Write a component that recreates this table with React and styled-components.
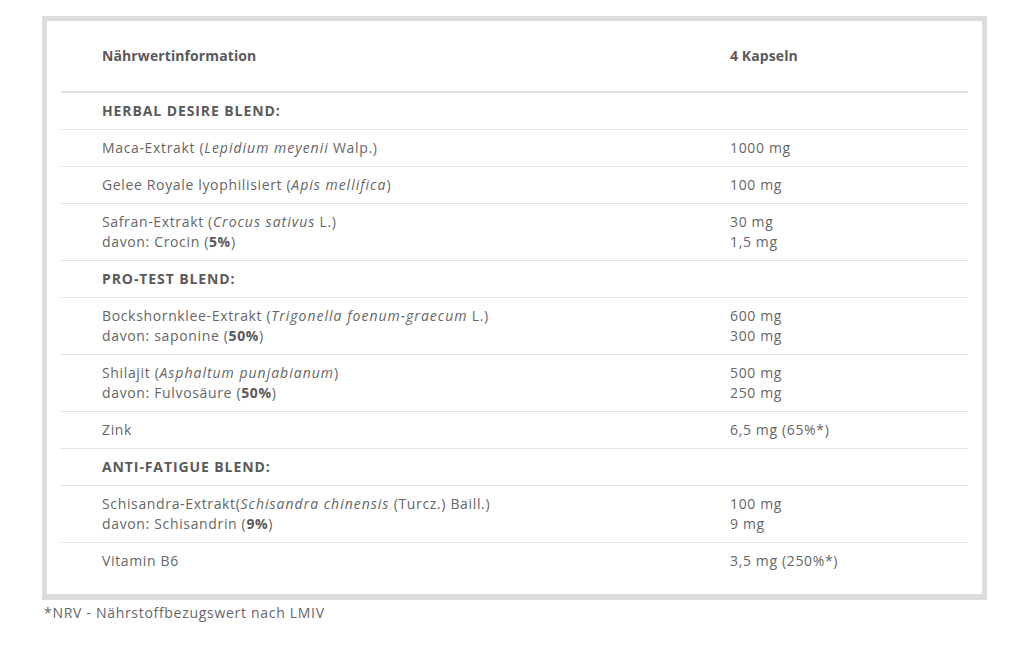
import styled, { createGlobalStyle } from "styled-components";

const GlobalStyle = createGlobalStyle`
  body {
    margin: 0;
    background: #fff;
    font-family: "Open Sans", "Liberation Sans", sans-serif;
    color: #666;
  }
`;

const Page = styled.div`
  padding: 16px 0 0 42px;
  width: 945px;
`;

const Frame = styled.div`
  border: 5px solid #dcdcdc;
  border-bottom-width: 6px;
  background: #fff;
  padding: 0 14px 15px;
`;

const Row = styled.div`
  display: grid;
  grid-template-columns: 628px 1fr;
  border-bottom: ${(p) => (p.$head ? "2px solid #dedede" : p.$last ? "none" : "1px solid #e2e2e2")};
  min-height: ${(p) => (p.$head ? "70px" : "auto")};
  align-items: center;
`;

const Cell = styled.div`
  padding: 8px 0 8px 41px;
  font-size: 14px;
  line-height: 20px;
  letter-spacing: 0.65px;
  color: #666;
`;

const HeadCell = styled(Cell)`
  font-weight: 700;
  letter-spacing: 0.1px;
  color: #5a5a5a;
`;

const BlendCell = styled(Cell)`
  font-weight: 700;
  letter-spacing: 0.9px;
  color: #5a5a5a;
`;

const Line = styled.div``;

const Sci = styled.em`
  font-style: italic;
  letter-spacing: 1px;
`;

const Pct = styled.b`
  font-weight: 700;
  color: #5a5a5a;
`;

const Note = styled.div`
  margin: 3px 0 0 2px;
  font-size: 14px;
  color: #666;
  letter-spacing: 0.7px;
`;

const rows = [
  { blend: "HERBAL DESIRE BLEND:" },
  {
    name: [<>Maca-Extrakt (<Sci>Lepidium meyenii</Sci> Walp.)</>],
    amount: ["1000 mg"],
  },
  {
    name: [<>Gelee Royale lyophilisiert (<Sci>Apis mellifica</Sci>)</>],
    amount: ["100 mg"],
  },
  {
    name: [
      <>Safran-Extrakt (<Sci>Crocus sativus</Sci> L.)</>,
      <>davon: Crocin (<Pct>5%</Pct>)</>,
    ],
    amount: ["30 mg", "1,5 mg"],
  },
  { blend: "PRO-TEST BLEND:" },
  {
    name: [
      <>Bockshornklee-Extrakt (<Sci>Trigonella foenum-graecum</Sci> L.)</>,
      <>davon: saponine (<Pct>50%</Pct>)</>,
    ],
    amount: ["600 mg", "300 mg"],
  },
  {
    name: [
      <>Shilajit (<Sci>Asphaltum punjabianum</Sci>)</>,
      <>davon: Fulvosäure (<Pct>50%</Pct>)</>,
    ],
    amount: ["500 mg", "250 mg"],
  },
  { name: ["Zink"], amount: ["6,5 mg (65%*)"] },
  { blend: "ANTI-FATIGUE BLEND:" },
  {
    name: [
      <>Schisandra-Extrakt(<Sci>Schisandra chinensis</Sci> (Turcz.) Baill.)</>,
      <>davon: Schisandrin (<Pct>9%</Pct>)</>,
    ],
    amount: ["100 mg", "9 mg"],
  },
  { name: ["Vitamin B6"], amount: ["3,5 mg (250%*)"] },
];

export default function App() {
  return (
    <Page>
      <GlobalStyle />
      <Frame>
        <Row $head>
          <HeadCell>Nährwertinformation</HeadCell>
          <HeadCell>4 Kapseln</HeadCell>
        </Row>
        {rows.map((r, i) =>
          r.blend ? (
            <Row key={i}>
              <BlendCell>{r.blend}</BlendCell>
              <Cell />
            </Row>
          ) : (
            <Row key={i} $last={i === rows.length - 1}>
              <Cell>
                {r.name.map((n, j) => (
                  <Line key={j}>{n}</Line>
                ))}
              </Cell>
              <Cell>
                {r.amount.map((a, j) => (
                  <Line key={j}>{a}</Line>
                ))}
              </Cell>
            </Row>
          )
        )}
      </Frame>
      <Note>*NRV - Nährstoffbezugswert nach LMIV</Note>
    </Page>
  );
}
